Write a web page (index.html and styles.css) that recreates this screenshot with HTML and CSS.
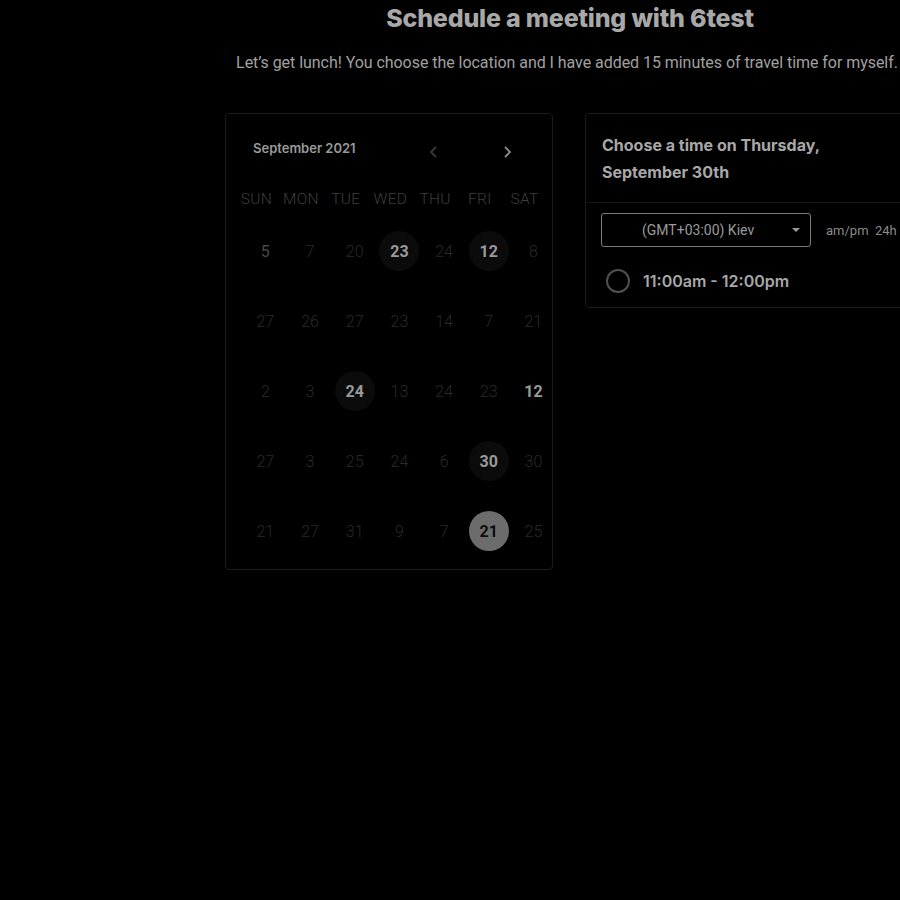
FILE: index.html
```html
<!DOCTYPE html>
<html>
<head>
<meta charset="utf-8">
<link rel="stylesheet" href="styles.css">
</head>
<body>
<div class="page">
  <h1 class="title">Schedule a meeting with 6test</h1>
  <p class="subtitle">Let’s get lunch! You choose the location and I have added 15 minutes of travel time for myself.</p>
  <div class="panels">
    <div class="card calendar">
      <div class="cal-head">
        <span class="month">September 2021</span>
        <div class="navs">
          <svg class="nav prev" width="12" height="16" viewBox="0 0 12 16"><path d="M8 3 L3 8 L8 13" fill="none" stroke="currentColor" stroke-width="1.8"/></svg>
          <svg class="nav next" width="12" height="16" viewBox="0 0 12 16"><path d="M4 3 L9 8 L4 13" fill="none" stroke="currentColor" stroke-width="1.8"/></svg>
        </div>
      </div>
      <div class="weekdays">
        <span>SUN</span><span>MON</span><span>TUE</span><span>WED</span><span>THU</span><span>FRI</span><span>SAT</span>
      </div>
      <div class="days">
        <span class="d mid">5</span><span class="d">7</span><span class="d">20</span><span class="d avail">23</span><span class="d">24</span><span class="d avail">12</span><span class="d">8</span>
        <span class="d">27</span><span class="d">26</span><span class="d">27</span><span class="d">23</span><span class="d">14</span><span class="d">7</span><span class="d">21</span>
        <span class="d">2</span><span class="d">3</span><span class="d avail">24</span><span class="d">13</span><span class="d">24</span><span class="d">23</span><span class="d bright">12</span>
        <span class="d">27</span><span class="d">3</span><span class="d">25</span><span class="d">24</span><span class="d">6</span><span class="d avail">30</span><span class="d">30</span>
        <span class="d">21</span><span class="d">27</span><span class="d">31</span><span class="d">9</span><span class="d">7</span><span class="d sel">21</span><span class="d">25</span>
      </div>
    </div>
    <div class="card times">
      <div class="times-head">Choose a time on Thursday, September 30th</div>
      <div class="times-body">
        <div class="controls">
          <div class="select">
            <span>(GMT+03:00) Kiev</span>
            <svg class="caret" width="8" height="5" viewBox="0 0 8 5"><path d="M0 0 H8 L4 4 Z" fill="currentColor"/></svg>
          </div>
          <span class="fmt">am/pm&nbsp;&nbsp;24h</span>
        </div>
        <label class="slot"><span class="radio"></span><span class="slot-text">11:00am - 12:00pm</span></label>
      </div>
    </div>
  </div>
</div>
</body>
</html>
```

FILE: styles.css
```css
html, body {
  margin: 0;
  padding: 0;
  background: #000;
  overflow: hidden;
  width: 900px;
  height: 900px;
}
body {
  font-family: Roboto, "Liberation Sans", sans-serif;
  color: #999;
}
.page {
  margin-left: 225px;
  width: 690px;
  display: flex;
  flex-direction: column;
}
.title {
  margin: 3px 0 0;
  text-align: center;
  font-family: Inter, "Liberation Sans", sans-serif;
  font-weight: 800;
  font-size: 25px;
  line-height: 30px;
  letter-spacing: -0.2px;
  color: #a8a8a8;
}
.subtitle {
  margin: 20px 6px 0 0;
  text-align: center;
  white-space: nowrap;
  font-weight: 400;
  font-size: 16px;
  line-height: 20px;
  color: #a0a0a0;
  letter-spacing: -0.05px;
}
.panels {
  display: flex;
  gap: 32px;
  margin-top: 40px;
  align-items: flex-start;
}
.card {
  border: 1px solid #1b1b1b;
  border-radius: 4px;
  box-sizing: border-box;
}
.calendar {
  width: 328px;
  height: 457px;
  padding: 0 0 0 8px;
}
.cal-head {
  display: flex;
  align-items: center;
  height: 30px;
  margin-top: 23px;
}
.month {
  font-family: Inter, "Liberation Sans", sans-serif;
  font-weight: 600;
  font-size: 13px;
  color: #9a9a9a;
  margin-left: 19px;
  margin-top: -8px;
}
.navs {
  display: flex;
  gap: 61px;
  margin-left: 72px;
}
.nav.prev { color: #3a3a3a; }
.nav.next { color: #8a8a8a; }
.weekdays {
  display: grid;
  grid-template-columns: repeat(7, 44.7px);
  margin-top: 17px;
  height: 30px;
  align-items: center;
}
.weekdays span {
  text-align: center;
  font-size: 15.5px;
  font-weight: 300;
  color: #3e3e3e;
  letter-spacing: 0.3px;
}
.days {
  display: grid;
  grid-template-columns: repeat(7, 44.7px);
  grid-auto-rows: 70px;
  margin-left: 9px;
  margin-top: 2px;
}
.d {
  display: flex;
  align-items: center;
  justify-content: center;
  width: 40px;
  height: 40px;
  margin: 15px auto 0;
  border-radius: 50%;
  font-size: 16px;
  font-weight: 300;
  color: #2a2a2a;
}
.d.mid { color: #4a4a4a; font-weight: 400; }
.d.avail {
  background: #0b0b0b;
  color: #9a9a9a;
  font-weight: 700;
}
.d.bright {
  color: #9a9a9a;
  font-weight: 700;
}
.d.sel {
  background: #6c6c6c;
  color: #0c0c0c;
  font-weight: 700;
}
.times {
  width: 330px;
  height: 195px;
}
.times-head {
  padding: 18px 90px 16px 16px;
  font-family: Inter, "Liberation Sans", sans-serif;
  font-weight: 700;
  font-size: 16px;
  line-height: 27px;
  color: #a8a8a8;
  border-bottom: 1px solid #161616;
}
.times-body {
  padding: 10px 15px 0 15px;
}
.controls {
  display: flex;
  align-items: center;
  gap: 15px;
}
.select {
  box-sizing: border-box;
  width: 210px;
  height: 34px;
  border: 1px solid #7a7a7a;
  border-radius: 3px;
  display: flex;
  align-items: center;
  justify-content: space-between;
  padding: 0 10px 0 40px;
  font-size: 14px;
  color: #9a9a9a;
}
.caret { color: #9a9a9a; }
.fmt {
  font-size: 13px;
  color: #8a8a8a;
}
.slot {
  display: flex;
  align-items: center;
  gap: 13px;
  margin-top: 22px;
  margin-left: 5px;
}
.radio {
  width: 20px;
  height: 20px;
  border: 2px solid #505050;
  border-radius: 50%;
}
.slot-text {
  font-family: Inter, "Liberation Sans", sans-serif;
  font-weight: 600;
  font-size: 16px;
  color: #a8a8a8;
  line-height: 24px;
}
```
